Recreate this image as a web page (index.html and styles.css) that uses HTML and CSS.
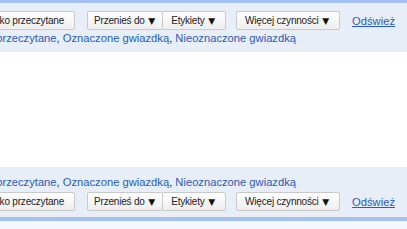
FILE: index.html
```html
<!DOCTYPE html>
<html lang="pl">
<head>
  <meta charset="UTF-8" />
  <title>Odebrane</title>
  <link rel="stylesheet" href="styles.css">
</head>
<body>
  <div class="panel panel-top">
    <div class="actions">
      <button class="btn">Oznacz jako przeczytane</button>
      <div class="btn-group">
        <button class="btn btn-move">Przenieś do <span class="arrow">▼</span></button>
        <button class="btn">Etykiety <span class="arrow">▼</span></button>
      </div>
      <button class="btn">Więcej czynności <span class="arrow">▼</span></button>
      <a href="#" class="refresh">Odśwież</a>
    </div>
    <div class="select">
      <span>Zaznacz: <a href="#">Wszystkie</a>, <a href="#">Żadne</a>, <a href="#">Przeczytane</a>, <a href="#">Nieprzeczytane</a>, <a href="#">Oznaczone gwiazdką</a>, <a href="#">Nieoznaczone gwiazdką</a></span>
    </div>
  </div>

  <div class="list"></div>

  <div class="panel panel-bottom">
    <div class="select">
      <span>Zaznacz: <a href="#">Wszystkie</a>, <a href="#">Żadne</a>, <a href="#">Przeczytane</a>, <a href="#">Nieprzeczytane</a>, <a href="#">Oznaczone gwiazdką</a>, <a href="#">Nieoznaczone gwiazdką</a></span>
    </div>
    <div class="actions">
      <button class="btn">Oznacz jako przeczytane</button>
      <div class="btn-group">
        <button class="btn btn-move">Przenieś do <span class="arrow">▼</span></button>
        <button class="btn">Etykiety <span class="arrow">▼</span></button>
      </div>
      <button class="btn">Więcej czynności <span class="arrow">▼</span></button>
      <a href="#" class="refresh">Odśwież</a>
    </div>
  </div>
  <div class="footer"></div>
</body>
</html>
```

FILE: styles.css
```css
body {
  margin: 0;
  font-family: "Liberation Sans", Arial, sans-serif;
  background-color: #ffffff;
  overflow: hidden;
}

.panel {
  background-color: #e8eef8;
  display: flex;
  flex-direction: column;
}

.panel-top {
  border-top: 3px solid #a3c0ee;
  padding: 8px 0 7px;
  gap: 1px;
}

.panel-bottom {
  border-bottom: 4px solid #a3c0ee;
  padding: 8px 0 6px;
  gap: 3px;
}

.actions {
  display: flex;
  justify-content: flex-end;
  align-items: center;
  height: 19px;
  padding-right: 12px;
  gap: 12px;
}

.btn {
  font-family: "Liberation Sans", Arial, sans-serif;
  font-size: 10px;
  letter-spacing: -0.2px;
  color: #222;
  height: 19px;
  padding: 0 10px 0 8px;
  border: 1px solid #c9c9c9;
  border-radius: 2px;
  background: linear-gradient(#ffffff, #eeeeee);
  white-space: nowrap;
  cursor: pointer;
}

.btn-move {
  padding: 0 7px 0 6px;
}

.btn-group {
  display: flex;
  margin-right: -2px;
}

.btn-group .btn + .btn {
  margin-left: -1px;
}

.arrow {
  font-family: "DejaVu Sans", sans-serif;
  font-size: 9px;
  letter-spacing: 0;
  margin-left: 1px;
  color: #111;
}

.refresh {
  font-size: 11.2px;
  color: #2a5db0;
  text-decoration: underline;
}

.select {
  display: flex;
  justify-content: flex-end;
  padding-right: 111px;
  font-size: 11.2px;
  line-height: 14px;
  white-space: nowrap;
  color: #222;
}

.select a {
  color: #2a5db0;
  text-decoration: none;
}

.list {
  height: 115px;
}

.footer {
  height: 8px;
  background-color: #f4f7fc;
}
```
